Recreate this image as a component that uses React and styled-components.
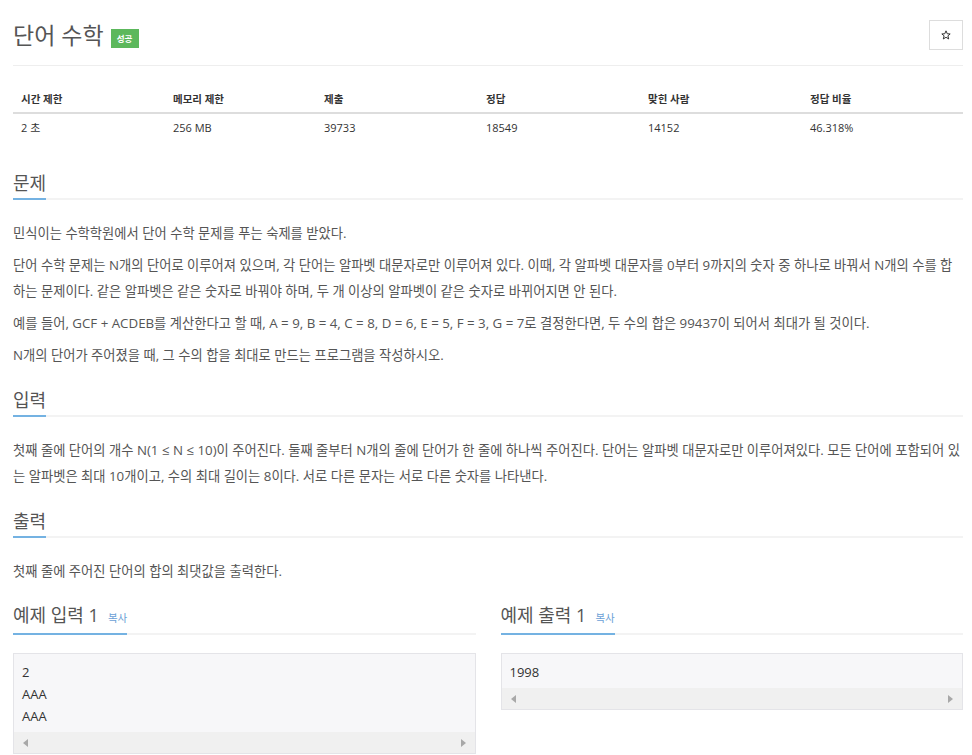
import styled, { createGlobalStyle } from "styled-components";

const GlobalStyle = createGlobalStyle`
  body {
    margin: 0;
    background: #fff;
    font-family: "Open Sans", "Noto Sans CJK KR", sans-serif;
    color: #555;
  }
`;

const Page = styled.div`
  width: 950px;
  margin-left: 13px;
  padding-top: 19px;
  padding-bottom: 40px;
`;

const TitleBar = styled.div`
  display: flex;
  align-items: center;
  justify-content: space-between;
  padding-bottom: 14px;
  border-bottom: 1px solid #eee;
`;

const TitleWrap = styled.div`
  display: flex;
  align-items: center;
  gap: 7px;
`;

const Title = styled.h1`
  margin: 0;
  font-size: 23px;
  line-height: 32px;
  font-weight: 400;
  color: #555;
`;

const Badge = styled.span`
  display: inline-flex;
  align-items: center;
  justify-content: center;
  width: 28px;
  height: 19px;
  margin-top: 6px;
  background: #5cb85c;
  color: #fff;
  font-size: 8.5px;
  font-weight: 700;
`;

const StarButton = styled.button`
  width: 34px;
  height: 30px;
  display: flex;
  align-items: center;
  justify-content: center;
  background: #fff;
  border: 1px solid #ddd;
  padding: 0;
  cursor: pointer;
`;

const InfoTable = styled.div`
  display: grid;
  grid-template-columns: 152px 151px 162px 162px 162px 1fr;
  margin-top: 18px;
`;

const HeadCell = styled.div`
  padding: 5px 8px 3px;
  line-height: 20px;
  font-size: 10.5px;
  font-weight: 700;
  color: #333;
  border-bottom: 2px solid #ddd;
`;

const Cell = styled.div`
  padding: 4px 8px;
  line-height: 20px;
  font-size: 11px;
  color: #333;
`;

const Section = styled.section`
  margin-top: ${(p) => p.top || 20}px;
`;

const Headline = styled.h2`
  display: flex;
  margin: 0;
  font-size: 18px;
  line-height: 24px;
  font-weight: 400;
  color: #555;
  border-bottom: 2px solid #f3f3f3;
`;

const HeadText = styled.span`
  display: flex;
  align-items: baseline;
  gap: 9px;
  padding-bottom: 3px;
  border-bottom: 2px solid #74b2e2;
  margin-bottom: -2px;
`;

const CopyLink = styled.span`
  font-size: 10.5px;
  color: #6b9fd6;
`;

const Body = styled.div`
  margin-top: 20px;
  font-size: 13.3px;
  line-height: 26px;
  p {
    margin: 0 0 6px;
  }
  p:last-child {
    margin-bottom: 0;
  }
`;

const Samples = styled.div`
  display: grid;
  grid-template-columns: 1fr 1fr;
  gap: 25px;
  margin-top: 19px;
`;

const SampleBox = styled.div`
  margin-top: 18px;
  border: 1px solid #e4e4e8;
  background: #f7f7f9;
`;

const Pre = styled.pre`
  margin: 0;
  padding: 7px 8px 5px;
  font-family: "Open Sans", "Noto Sans CJK KR", sans-serif;
  font-size: 13px;
  line-height: 22px;
  color: #333;
`;

const ScrollTrack = styled.div`
  height: 21px;
  background: #f0f0f0;
  display: flex;
  align-items: center;
  justify-content: space-between;
  padding: 0 9px;
`;

const Arrow = styled.span`
  width: 0;
  height: 0;
  border-top: 4px solid transparent;
  border-bottom: 4px solid transparent;
  ${(p) =>
    p.dir === "left"
      ? "border-right: 5px solid #a8a8a8;"
      : "border-left: 5px solid #a8a8a8;"}
`;

const Star = () => (
  <svg width="10" height="10" viewBox="0 0 24 24" fill="none" stroke="#333" strokeWidth="2.4" strokeLinejoin="round">
    <polygon points="12,2 15,9 22,9.5 16.5,14 18.5,21.5 12,17.5 5.5,21.5 7.5,14 2,9.5 9,9" />
  </svg>
);

const info = [
  ["시간 제한", "2 초"],
  ["메모리 제한", "256 MB"],
  ["제출", "39733"],
  ["정답", "18549"],
  ["맞힌 사람", "14152"],
  ["정답 비율", "46.318%"],
];

const Sample = ({ title, data }) => (
  <div>
    <Headline>
      <HeadText>
        {title}
        <CopyLink>복사</CopyLink>
      </HeadText>
    </Headline>
    <SampleBox>
      <Pre>{data}</Pre>
      <ScrollTrack>
        <Arrow dir="left" />
        <Arrow dir="right" />
      </ScrollTrack>
    </SampleBox>
  </div>
);

export default function App() {
  return (
    <Page>
      <GlobalStyle />
      <TitleBar>
        <TitleWrap>
          <Title>단어 수학</Title>
          <Badge>성공</Badge>
        </TitleWrap>
        <StarButton>
          <Star />
        </StarButton>
      </TitleBar>

      <InfoTable>
        {info.map(([h]) => (
          <HeadCell key={h}>{h}</HeadCell>
        ))}
        {info.map(([h, v]) => (
          <Cell key={h}>{v}</Cell>
        ))}
      </InfoTable>

      <Section top={29}>
        <Headline>
          <HeadText>문제</HeadText>
        </Headline>
        <Body>
          <p>민식이는 수학학원에서 단어 수학 문제를 푸는 숙제를 받았다.</p>
          <p>
            단어 수학 문제는 N개의 단어로 이루어져 있으며, 각 단어는 알파벳 대문자로만 이루어져 있다. 이때, 각 알파벳
            대문자를 0부터 9까지의 숫자 중 하나로 바꿔서 N개의 수를 합하는 문제이다. 같은 알파벳은 같은 숫자로 바꿔야
            하며, 두 개 이상의 알파벳이 같은 숫자로 바뀌어지면 안 된다.
          </p>
          <p>
            예를 들어, GCF + ACDEB를 계산한다고 할 때, A = 9, B = 4, C = 8, D = 6, E = 5, F = 3, G = 7로 결정한다면, 두
            수의 합은 99437이 되어서 최대가 될 것이다.
          </p>
          <p>N개의 단어가 주어졌을 때, 그 수의 합을 최대로 만드는 프로그램을 작성하시오.</p>
        </Body>
      </Section>

      <Section>
        <Headline>
          <HeadText>입력</HeadText>
        </Headline>
        <Body>
          <p>
            첫째 줄에 단어의 개수 N(1 ≤ N ≤ 10)이 주어진다. 둘째 줄부터 N개의 줄에 단어가 한 줄에 하나씩 주어진다.
            단어는 알파벳 대문자로만 이루어져있다. 모든 단어에 포함되어 있는 알파벳은 최대 10개이고, 수의 최대 길이는
            8이다. 서로 다른 문자는 서로 다른 숫자를 나타낸다.
          </p>
        </Body>
      </Section>

      <Section>
        <Headline>
          <HeadText>출력</HeadText>
        </Headline>
        <Body>
          <p>첫째 줄에 주어진 단어의 합의 최댓값을 출력한다.</p>
        </Body>
      </Section>

      <Samples>
        <Sample title="예제 입력 1" data={"2\nAAA\nAAA"} />
        <Sample title="예제 출력 1" data={"1998"} />
      </Samples>
    </Page>
  );
}
